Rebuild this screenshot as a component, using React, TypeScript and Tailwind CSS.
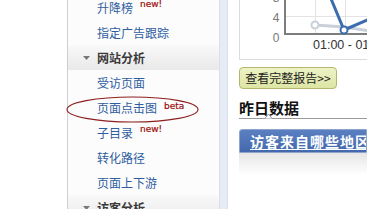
import React from "react";

const CJK = '"Noto Sans CJK SC", "Liberation Sans", sans-serif';

type NavRow =
  | { kind: "header"; label: string }
  | { kind: "item"; label: string; tag?: "new!" | "beta" };

const rows: NavRow[] = [
  { kind: "item", label: "升降榜", tag: "new!" },
  { kind: "item", label: "指定广告跟踪" },
  { kind: "header", label: "网站分析" },
  { kind: "item", label: "受访页面" },
  { kind: "item", label: "页面点击图", tag: "beta" },
  { kind: "item", label: "子目录", tag: "new!" },
  { kind: "item", label: "转化路径" },
  { kind: "item", label: "页面上下游" },
  { kind: "header", label: "访客分析" },
];

function Tag({ text }: { text: string }) {
  const raised = text === "new!";
  return (
    <span
      className={`ml-[7px] text-[9px] leading-none text-[#9a0c0c] inline-block ${raised ? "-translate-y-[3px]" : "-translate-y-[1px]"}`}
      style={{ fontFamily: '"DejaVu Sans", sans-serif', WebkitTextStroke: "0.2px #9a0c0c" }}
    >
      {text}
    </span>
  );
}

function Sidebar() {
  return (
    <div className="w-[152px] h-full border-l border-[#cfcfcf] bg-[#fcfcfc] overflow-hidden">
      <div className="-mt-[5px]">
        {rows.map((r) =>
          r.kind === "header" ? (
            <div
              key={r.label}
              className="h-[25px] flex items-center pl-[15px] bg-gradient-to-b from-[#f9f9f9] to-[#e9e9e9]"
            >
              <svg width="7" height="4" viewBox="0 0 7 4" className="mr-[7px]">
                <path d="M0 0H7L3.5 4Z" fill="#777" />
              </svg>
              <span className="text-[12px] font-bold text-[#3a3a3a]">{r.label}</span>
            </div>
          ) : (
            <div key={r.label} className="h-[25px] flex items-center pl-[29px]">
              <span className="text-[12px] text-[#2f5c9f]">{r.label}</span>
              {r.tag && <Tag text={r.tag} />}
            </div>
          )
        )}
      </div>
    </div>
  );
}

// small hourly chart, only its lower edge is in view
function MiniChart() {
  const ox = 240;
  const x = (v: number) => v - ox;
  return (
    <svg className="absolute inset-0" width="128" height="59" viewBox="0 0 128 59">
      <line x1={x(286)} y1="16.5" x2="128" y2="16.5" stroke="#e3e3e3" />
      <line x1={x(315.5)} y1="0" x2={x(315.5)} y2="33" stroke="#e3e3e3" />
      <line x1={x(345.5)} y1="0" x2={x(345.5)} y2="33" stroke="#e3e3e3" />
      <g fill="#777" fontSize="12" fontFamily='"Liberation Sans", Arial, sans-serif' textAnchor="middle">
        <text x={x(276)} y="2">8</text>
        <text x={x(276)} y="22">4</text>
        <text x={x(276)} y="42">0</text>
      </g>
      <rect x={x(284)} y="0" width="2" height="35" fill="#7d7d7d" />
      <rect x={x(284)} y="33" width="100" height="2" fill="#7d7d7d" />
      <polyline points={`${x(315)},25 ${x(344)},27 ${x(370)},31`} fill="none" stroke="#c9d0d9" strokeWidth="3" />
      <circle cx={x(315)} cy="25" r="3.5" fill="#fff" stroke="#c9d0d9" strokeWidth="2" />
      <polyline points={`${x(329)},-6 ${x(344)},30 ${x(372)},18`} fill="none" stroke="#3b6cae" strokeWidth="3" strokeLinejoin="round" />
      <circle cx={x(344)} cy="30" r="3.5" fill="#fff" stroke="#3b6cae" strokeWidth="2" />
      <text x={x(313)} y="49" fontSize="12.5" fill="#333" fontFamily='"Liberation Sans", Arial, sans-serif'>
        01:00 - 01:59
      </text>
    </svg>
  );
}

export default function App() {
  return (
    <div
      className="relative w-[367px] h-[209px] overflow-hidden bg-white flex"
      style={{ fontFamily: CJK }}
    >
      <div className="w-[67px] shrink-0" />
      <Sidebar />
      <div className="w-[9px] shrink-0 bg-[#e5ecf5] border-l border-[#d8e0ea] border-r border-[#a7b3c4]" />

      <div className="flex-1 min-w-0 pl-[11px]">
        <div className="relative h-[60px] border-l border-b border-[#dcdcdc]">
          <MiniChart />
        </div>

        <button className="mt-[7px] w-[98px] h-[22px] rounded-[4px] border border-[#b3b76d] bg-gradient-to-b from-[#eef2c6] to-[#dde5a4] text-[12px] text-[#222] leading-none flex items-center justify-center">
          查看完整报告&gt;&gt;
        </button>

        <div className="relative mt-[9px] h-[21px] border-b border-[#9a9a9a] text-[15px] font-bold leading-[20px] text-[#111] whitespace-nowrap">
          昨日数据
          <svg className="absolute left-[24px] bottom-[-1px]" width="11" height="6" viewBox="0 0 11 6">
            <path d="M0 5.5H2L5.5 1L9 5.5H11" fill="#fff" stroke="#9a9a9a" />
          </svg>
        </div>

        <div className="mt-[10px] h-[24px] rounded-tl-[3px] border border-[#8ea4c8] bg-gradient-to-b from-[#5a80c2] to-[#4468ad] pl-[10px] flex items-center whitespace-nowrap overflow-hidden">
          <span className="text-[14px] font-bold tracking-[1px] text-white underline underline-offset-2">
            访客来自哪些地区分布
          </span>
        </div>
        <div className="h-[22px] bg-gradient-to-b from-[#e6e6e6] to-white" />
      </div>

      <svg className="absolute left-[66px] top-[96px]" width="133" height="27" viewBox="0 0 133 27">
        <ellipse cx="66.5" cy="13.5" rx="65.5" ry="12.5" fill="none" stroke="#8e1f1f" strokeWidth="1.1" />
      </svg>
    </div>
  );
}
